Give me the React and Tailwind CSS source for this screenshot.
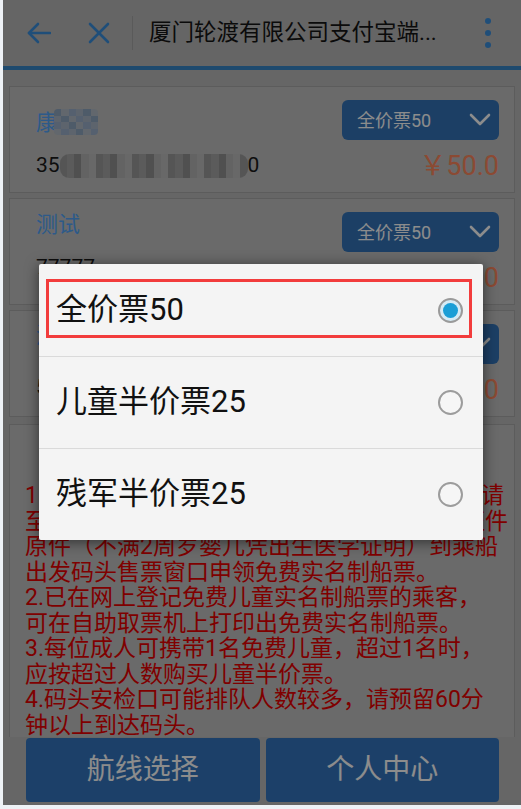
import React from 'react';

const SHADES = ['bg-[#9c9c9c]', 'bg-[#b4b4b4]', 'bg-[#a6a6a6]', 'bg-[#bebebe]', 'bg-[#929292]'];
const BLUE_SHADES = ['bg-[#8fa6c0]', 'bg-[#a9b7c6]', 'bg-[#9bb0ca]', 'bg-[#b3bcc6]'];

// left column offsets differ per card in the screenshot
const LAYOUTS = {
  a: { top: 'pt-[20px]', gap: 'mt-[14px]' },
  b: { top: 'pt-[10px]', gap: 'mt-[14px]' },
  c: { top: 'pt-[9px]', gap: 'mt-[23px]' },
};

function Pixels({ cols, rows, shades, className }) {
  const cells = [];
  for (let i = 0; i < cols * rows; i++) {
    cells.push(shades[(i * 7 + Math.floor(i / cols) * 3) % shades.length]);
  }
  return (
    <span className={`inline-grid overflow-hidden ${className}`} style={{ gridTemplateColumns: `repeat(${cols}, 1fr)` }}>
      {cells.map((c, i) => <span key={i} className={c} />)}
    </span>
  );
}

function Chevron() {
  return (
    <svg width="22" height="14" viewBox="0 0 22 14" fill="none" stroke="#ffffff" strokeWidth="2.6" strokeLinecap="round" strokeLinejoin="round">
      <polyline points="2,2 11,11 20,2" />
    </svg>
  );
}

function Select() {
  return (
    <div className="w-[157px] h-[40px] rounded-[6px] bg-[#3374b9] flex items-center justify-between pl-[15px] pr-[8px]">
      <span className="text-[18px] text-white">全价票50</span>
      <Chevron />
    </div>
  );
}

function Passenger({ name, number, redactName, layout }) {
  const l = LAYOUTS[layout];
  return (
    <div className="shrink-0 h-[107px] border border-[#a8a8a8] bg-[#c1c1c1] pl-[26px] pr-[15px] flex justify-between">
      <div className={`flex flex-col ${l.top}`}>
        <div className="h-[30px] flex items-center text-[22px] text-[#52a5f9]">
          {name}
          {redactName && <Pixels cols={6} rows={4} shades={BLUE_SHADES} className="w-[44px] h-[26px] rounded-[4px] -ml-[4px]" />}
        </div>
        <div className={`h-[30px] flex items-center text-[21px] text-[#1a1a1a] ${l.gap}`}>{number}</div>
      </div>
      <div className="flex flex-col items-end pt-[13px]">
        <Select />
        <span className="mt-[12px] h-[28px] flex items-center text-[27px] text-[#fd875d] leading-none">￥50.0</span>
      </div>
    </div>
  );
}

function Radio({ checked }) {
  if (checked) {
    return (
      <span className="w-[25px] h-[25px] rounded-full border-2 border-[#9a9a9a] bg-[#d6ebf5] flex items-center justify-center">
        <span className="w-[15px] h-[15px] rounded-full bg-[#1a9ed6]" />
      </span>
    );
  }
  return <span className="w-[25px] h-[25px] rounded-full border-2 border-[#9c9c9c] bg-[#f6f6f6]" />;
}

const notes = [
  '1.未在网上登记免费儿童实名制船票的乘客，请',
  '至乘船码头售票窗口凭成人及儿童有效身份证件',
  '原件（不满2周岁婴儿凭出生医学证明）到乘船',
  '出发码头售票窗口申领免费实名制船票。',
  '2.已在网上登记免费儿童实名制船票的乘客，',
  '可在自助取票机上打印出免费实名制船票。',
  '3.每位成人可携带1名免费儿童，超过1名时，',
  '应按超过人数购买儿童半价票。',
  '4.码头安检口可能排队人数较多，请预留60分',
  '钟以上到达码头。',
];

const options = ['全价票50', '儿童半价票25', '残军半价票25'];

export default function App() {
  return (
    <div className="w-[521px] h-[809px] relative overflow-hidden bg-[#eef2f6] pl-[3px] pb-[4px] font-['Roboto','Noto_Sans_CJK_SC',sans-serif]">
      <div className="relative w-[518px] h-[805px] bg-[#bababa] flex flex-col">
        {/* header */}
        <header className="h-[66px] flex items-center bg-[#b8b8b8] shrink-0">
          <svg className="ml-[24px]" width="24" height="22" viewBox="0 0 24 22" fill="none" stroke="#3a8fdc" strokeWidth="2.6" strokeLinecap="round" strokeLinejoin="round">
            <line x1="2" y1="11" x2="23" y2="11" />
            <polyline points="11,2 2,11 11,20" />
          </svg>
          <svg className="ml-[37px]" width="22" height="22" viewBox="0 0 22 22" fill="none" stroke="#3a8fdc" strokeWidth="2.6" strokeLinecap="round">
            <line x1="2" y1="2" x2="20" y2="20" />
            <line x1="20" y1="2" x2="2" y2="20" />
          </svg>
          <div className="ml-[22px] w-px h-[34px] bg-[#a4a4a4]" />
          <h1 className="ml-[16px] text-[22.5px] text-[#141414] whitespace-nowrap">厦门轮渡有限公司支付宝端...</h1>
          <div className="ml-auto mr-[30px] flex flex-col gap-[6px]">
            <span className="w-[6px] h-[6px] rounded-full bg-[#3a8fdc]" />
            <span className="w-[6px] h-[6px] rounded-full bg-[#3a8fdc]" />
            <span className="w-[6px] h-[6px] rounded-full bg-[#3a8fdc]" />
          </div>
        </header>
        <div className="h-[4px] bg-[#3887c8] shrink-0" />

        {/* content */}
        <main className="flex-1 overflow-hidden px-[6px] pt-[16px] flex flex-col gap-[5px]">
          <Passenger
            layout="a"
            name="康"
            redactName
            number={<>35<Pixels cols={26} rows={3} shades={SHADES} className="w-[188px] h-[24px] rounded-[9px]" />0</>}
          />
          <Passenger layout="b" name="测试" number="77777" />
          <Passenger layout="c" name="测试" number="5" />
          <section className="shrink-0 mt-[2px] border border-[#a8a8a8] bg-[#c1c1c1] pl-[15px] pt-[11px] pb-[20px]">
            <h2 className="text-center text-[22px] text-[#e80000] h-[47px]">购票须知</h2>
            <div className="text-[23px] leading-[25.5px] text-[#e80000]">
              {notes.map((l, i) => (
                <div key={i} className="whitespace-nowrap">{l}</div>
              ))}
            </div>
          </section>
        </main>

        {/* footer */}
        <footer className="h-[68px] shrink-0 flex gap-[6px] pl-[23px] pr-[22px] pt-[1px] pb-[3px] bg-[#bababa]">
          <button className="flex-1 rounded-[4px] bg-[#3376bf] text-[28px] text-white">航线选择</button>
          <button className="flex-1 rounded-[4px] bg-[#3376bf] text-[28px] text-white">个人中心</button>
        </footer>

        {/* backdrop */}
        <div className="absolute inset-0 bg-black/45" />
      </div>

      {/* dialog */}
      <div className="absolute left-[39px] top-[264px] w-[444px] bg-[#f4f4f4] rounded-[2px] shadow-[0_2px_14px_rgba(0,0,0,0.55)]">
        {options.map((o, i) => (
          <div key={o} className={`h-[92px] flex items-center justify-between pl-[17px] pr-[20px] ${i > 0 ? 'border-t border-[#dadada]' : ''}`}>
            <span className="text-[31px] text-[#111]">{o}</span>
            <Radio checked={i === 0} />
          </div>
        ))}
        <div className="absolute left-[7px] top-[15px] w-[426px] h-[59px] border-[3px] border-[#f23c3c]" />
      </div>
    </div>
  );
}
